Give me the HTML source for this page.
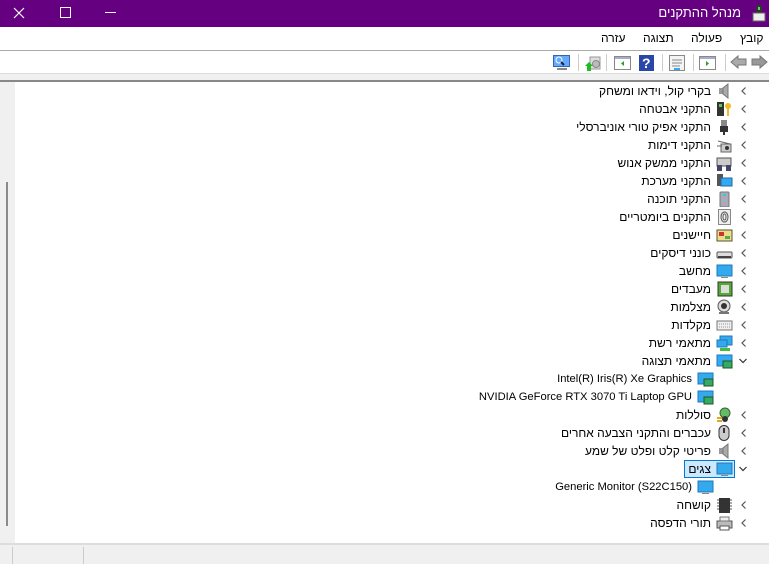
<!DOCTYPE html>
<html><head><meta charset="utf-8"><style>
*{margin:0;padding:0;box-sizing:border-box}
body{width:769px;height:564px;overflow:hidden;background:#fff;font-family:"Segoe UI","Liberation Sans","Noto Sans CJK SC",sans-serif;font-size:12px;color:#000;position:relative}
.abs{position:absolute}
#title{left:0;top:0;width:769px;height:27px;background:#650080}
#title .t{right:28px;top:5px;color:#fff;font-size:13px;direction:rtl;white-space:nowrap}
#menu{top:28px;left:0;width:769px;height:22px}
#menu span{position:absolute;top:3px;font-size:12px}
.row{position:absolute;height:18px;width:769px;left:0}
.row .tx{position:absolute;top:1px;white-space:nowrap;direction:rtl;line-height:16px}
.row .lat{font-size:11.2px}
.row svg{position:absolute;top:1px}
.chev{position:absolute;top:1px}
</style></head><body>
<div id="title" class="abs">
<svg class="abs" style="left:13px;top:7px" width="12" height="12"><path d="M1 1L11 11M11 1L1 11" stroke="#fff" stroke-width="1.2"/></svg>
<div class="abs" style="left:60px;top:7px;width:11px;height:11px;border:1px solid #fff"></div>
<div class="abs" style="left:105px;top:12px;width:11px;height:1px;background:#fff"></div>
<span class="t abs">מנהל ההתקנים</span>
<svg class="abs" style="left:752px;top:4px" width="14" height="18"><rect x="4" y="1" width="6" height="8" fill="#333"/><rect x="6" y="3" width="2" height="3" fill="#6c6"/><rect x="1" y="9" width="12" height="8" fill="#eee" stroke="#666"/></svg>
</div>
<div id="menu" class="abs">
<span style="left:740px">קובץ</span><span style="left:691px">פעולה</span><span style="left:643px">תצוגה</span><span style="left:601px">עזרה</span>
</div>
<div class="abs" style="top:50px;left:0;width:769px;height:1px;background:#aaa"></div>
<div class="abs" style="top:51px;left:0;width:769px;height:22px;background:#fff"></div>
<div class="abs" style="top:73px;left:0;width:769px;height:1px;background:#ddd"></div>
<div class="abs" style="top:74px;left:0;width:769px;height:6px;background:#f0f0f0"></div>
<div class="abs" style="top:80px;left:0;width:769px;height:2px;background:#888"></div>
<svg class="abs" style="left:0;top:51px" width="769" height="22">
<g stroke="#ccc"><line x1="725.5" y1="3" x2="725.5" y2="20"/><line x1="693.5" y1="3" x2="693.5" y2="20"/><line x1="662.5" y1="3" x2="662.5" y2="20"/><line x1="606.5" y1="3" x2="606.5" y2="20"/><line x1="578.5" y1="3" x2="578.5" y2="20"/></g>
<path d="M752 11l7-6v3h8v6h-8v3z" fill="#999" stroke="#777" transform="translate(1519 0) scale(-1 1)"/>
<path d="M731 11l7-6v3h8v6h-8v3z" fill="#aaa" stroke="#777"/>
<rect x="699.5" y="5.5" width="16" height="13" fill="#fff" stroke="#888"/><rect x="700" y="6" width="15" height="2" fill="#aac"/><path d="M706 10v5l3-2.5z" fill="#393"/>
<rect x="669.5" y="4.5" width="15" height="15" fill="#f4f4f4" stroke="#888"/><g stroke="#888"><line x1="672" y1="9" x2="682" y2="9"/><line x1="672" y1="12" x2="682" y2="12"/><line x1="672" y1="15" x2="680" y2="15"/></g><rect x="674" y="17" width="6" height="2" fill="#3ae"/>
<rect x="639" y="4" width="15" height="16" fill="#2847a8"/><text x="642" y="17" fill="#fff" font-size="14" font-weight="bold" font-family="Liberation Sans">?</text>
<rect x="614.5" y="5.5" width="16" height="13" fill="#fff" stroke="#888"/><rect x="615" y="6" width="15" height="2" fill="#aac"/><path d="M624 10v5l-3-2.5z" fill="#393"/>
<rect x="590" y="6" width="10" height="12" fill="#ddd" stroke="#999"/><circle cx="596" cy="13" r="3.5" fill="#bbb" stroke="#888"/><path d="M585 15l4-4 4 4h-2v5h-4v-5z" fill="#2b2"/>
<rect x="553.5" y="4.5" width="16" height="11" fill="#6af" stroke="#36a"/><circle cx="559" cy="9" r="3" fill="none" stroke="#fff"/><line x1="561" y1="11" x2="564" y2="14" stroke="#124" stroke-width="2"/><rect x="557" y="17" width="10" height="2" fill="#888"/>
</svg>
<div class="abs" style="left:0;top:82px;width:15px;height:462px;background:#f0f0f0"></div>
<div class="abs" style="left:6px;top:182px;width:2px;height:344px;background:#8a8a8a"></div>
<div class="abs" style="top:543px;left:0;width:769px;height:2px;background:#ddd"></div>
<div class="abs" style="top:545px;left:0;width:769px;height:19px;background:#f0f0f0"></div>
<div class="abs" style="top:547px;left:12px;width:1px;height:17px;background:#ccc"></div>
<div class="abs" style="top:547px;left:83px;width:1px;height:17px;background:#ccc"></div>

<div id="rows"></div>
<script>
var items=[
["בקרי קול, וידאו ומשחק","spk",0],["התקני אבטחה","sec",0],["התקני אפיק טורי אוניברסלי","usb",0],["התקני דימות","cam2",0],["התקני ממשק אנוש","hid",0],["התקני מערכת","sys",0],["התקני תוכנה","sw",0],["התקנים ביומטריים","bio",0],["חיישנים","sen",0],["כונני דיסקים","disk",0],["מחשב","mon",0],["מעבדים","cpu",0],["מצלמות","web",0],["מקלדות","kb",0],["מתאמי רשת","net",0],["מתאמי תצוגה","disp",2],
["Intel(R) Iris(R) Xe Graphics","disp",1],["NVIDIA GeForce RTX 3070 Ti Laptop GPU","disp",1],
["סוללות","bat",0],["עכברים והתקני הצבעה אחרים","mouse",0],["פריטי קלט ופלט של שמע","spk",0],["צגים","mon",3],["Generic Monitor (S22C150)","mon",1],["קושחה","fw",0],["תורי הדפסה","prn",0]];
function icon(t){
return {
spk:'<rect x="3" y="5" width="4" height="6" fill="#999"/><path d="M7 5l5-4v14l-5-4z" fill="#aaa" stroke="#777"/>',
sec:'<rect x="1" y="1" width="7" height="14" fill="#333"/><rect x="3" y="3" width="3" height="3" fill="#5c5"/><circle cx="12" cy="5" r="3" fill="#eb2"/><rect x="11" y="7" width="2" height="8" fill="#eb2"/>',
usb:'<rect x="5" y="1" width="6" height="6" fill="#888"/><rect x="4" y="7" width="8" height="6" fill="#333"/><rect x="7" y="13" width="2" height="3" fill="#333"/>',
cam2:'<rect x="5" y="7" width="10" height="8" fill="#ccc" stroke="#666"/><circle cx="11" cy="11" r="2" fill="#333"/><path d="M1 9h5M2 4l12 3" stroke="#666"/>',
hid:'<rect x="1" y="3" width="14" height="8" fill="#ccc" stroke="#555"/><rect x="1" y="10" width="5" height="6" fill="#446"/><rect x="10" y="10" width="5" height="6" fill="#446"/>',
sys:'<rect x="1" y="1" width="6" height="12" fill="#555"/><rect x="5" y="5" width="11" height="8" fill="#3ae" stroke="#26a"/>',
sw:'<rect x="4" y="1" width="9" height="15" rx="1" fill="#aab" stroke="#777"/><rect x="7" y="3" width="3" height="2" fill="#3cc"/>',
bio:'<rect x="2.5" y="0.5" width="12" height="15" fill="#eee" stroke="#888"/><ellipse cx="8.5" cy="8" rx="3.5" ry="5" fill="none" stroke="#555"/><ellipse cx="8.5" cy="8" rx="1.5" ry="3" fill="none" stroke="#555"/>',
sen:'<rect x="1" y="3" width="15" height="11" fill="#ed8" stroke="#553"/><rect x="3" y="5" width="5" height="4" fill="#c33"/><rect x="9" y="9" width="5" height="3" fill="#5a5"/>',
disk:'<rect x="1" y="7" width="15" height="6" rx="1" fill="#ddd" stroke="#555"/><rect x="2" y="11" width="13" height="2" fill="#444"/>',
mon:'<rect x="1" y="2" width="15" height="11" fill="#3ae" stroke="#27b"/><rect x="5" y="14" width="7" height="1" fill="#888"/>',
cpu:'<rect x="2" y="1" width="14" height="14" fill="#5a3" stroke="#333"/><rect x="5" y="4" width="8" height="8" fill="#ddd"/>',
web:'<circle cx="8" cy="7" r="6" fill="#ddd" stroke="#555"/><circle cx="8" cy="7" r="3" fill="#333"/><rect x="3" y="13" width="10" height="2" fill="#777"/>',
kb:'<rect x="1" y="4" width="15" height="9" fill="#eee" stroke="#777"/><path d="M3 7h11M3 10h11" stroke="#999" stroke-dasharray="1 1"/>',
net:'<rect x="4" y="1" width="12" height="9" fill="#3ae" stroke="#27b"/><rect x="1" y="5" width="10" height="7" fill="#3ae" stroke="#27b"/><rect x="4" y="13" width="10" height="3" fill="#4b4"/>',
disp:'<rect x="1" y="2" width="15" height="11" fill="#3ae" stroke="#27b"/><rect x="7" y="8" width="9" height="7" fill="#3a6" stroke="#252"/>',
bat:'<circle cx="9" cy="6" r="5" fill="#6b6" stroke="#363"/><path d="M1 11h5M1 14h5" stroke="#da2" stroke-width="2"/><circle cx="9" cy="12" r="3" fill="#333"/>',
mouse:'<rect x="3" y="0.5" width="10" height="15" rx="5" fill="#ccc" stroke="#333"/><rect x="7" y="3" width="2" height="5" fill="#333"/>',
fw:'<rect x="3" y="1" width="11" height="15" fill="#333"/><path d="M1 3h2M1 6h2M1 9h2M1 12h2M14 3h2M14 6h2M14 9h2M14 12h2" stroke="#555"/>',
prn:'<rect x="1" y="6" width="15" height="7" fill="#bbb" stroke="#555"/><rect x="4" y="2" width="9" height="4" fill="#eee" stroke="#777"/><rect x="4" y="11" width="9" height="4" fill="#fff" stroke="#555"/>'
}[t];
}
var h='';
items.forEach(function(it,i){
var top=82+i*18, child=it[2]==1, lvl=child?19:0;
var iconX=716-lvl, txR=769-711+lvl;
h+='<div class="row" style="top:'+top+'px">';
if(it[2]==3) h+='<div class="abs" style="left:684px;top:0;width:51px;height:18px;background:#cce8ff;border:1px solid #0078d7"></div>';
if(!child){
 if(it[2]==2||it[2]==3) h+='<svg class="chev" style="left:738px" width="10" height="16"><path d="M1.5 6l3.5 3.5 3.5-3.5" fill="none" stroke="#333" stroke-width="1.2"/></svg>';
 else h+='<svg class="chev" style="left:739px" width="10" height="16"><path d="M6.5 4.5l-3.5 3.5 3.5 3.5" fill="none" stroke="#555" stroke-width="1.2"/></svg>';
}
h+='<svg style="left:'+iconX+'px" width="17" height="16">'+icon(it[1])+'</svg>';
h+='<span class="tx'+(child?' lat':'')+'" style="right:'+txR+'px">'+it[0]+'</span></div>';
});
document.getElementById('rows').innerHTML=h;
</script>
</body></html>
